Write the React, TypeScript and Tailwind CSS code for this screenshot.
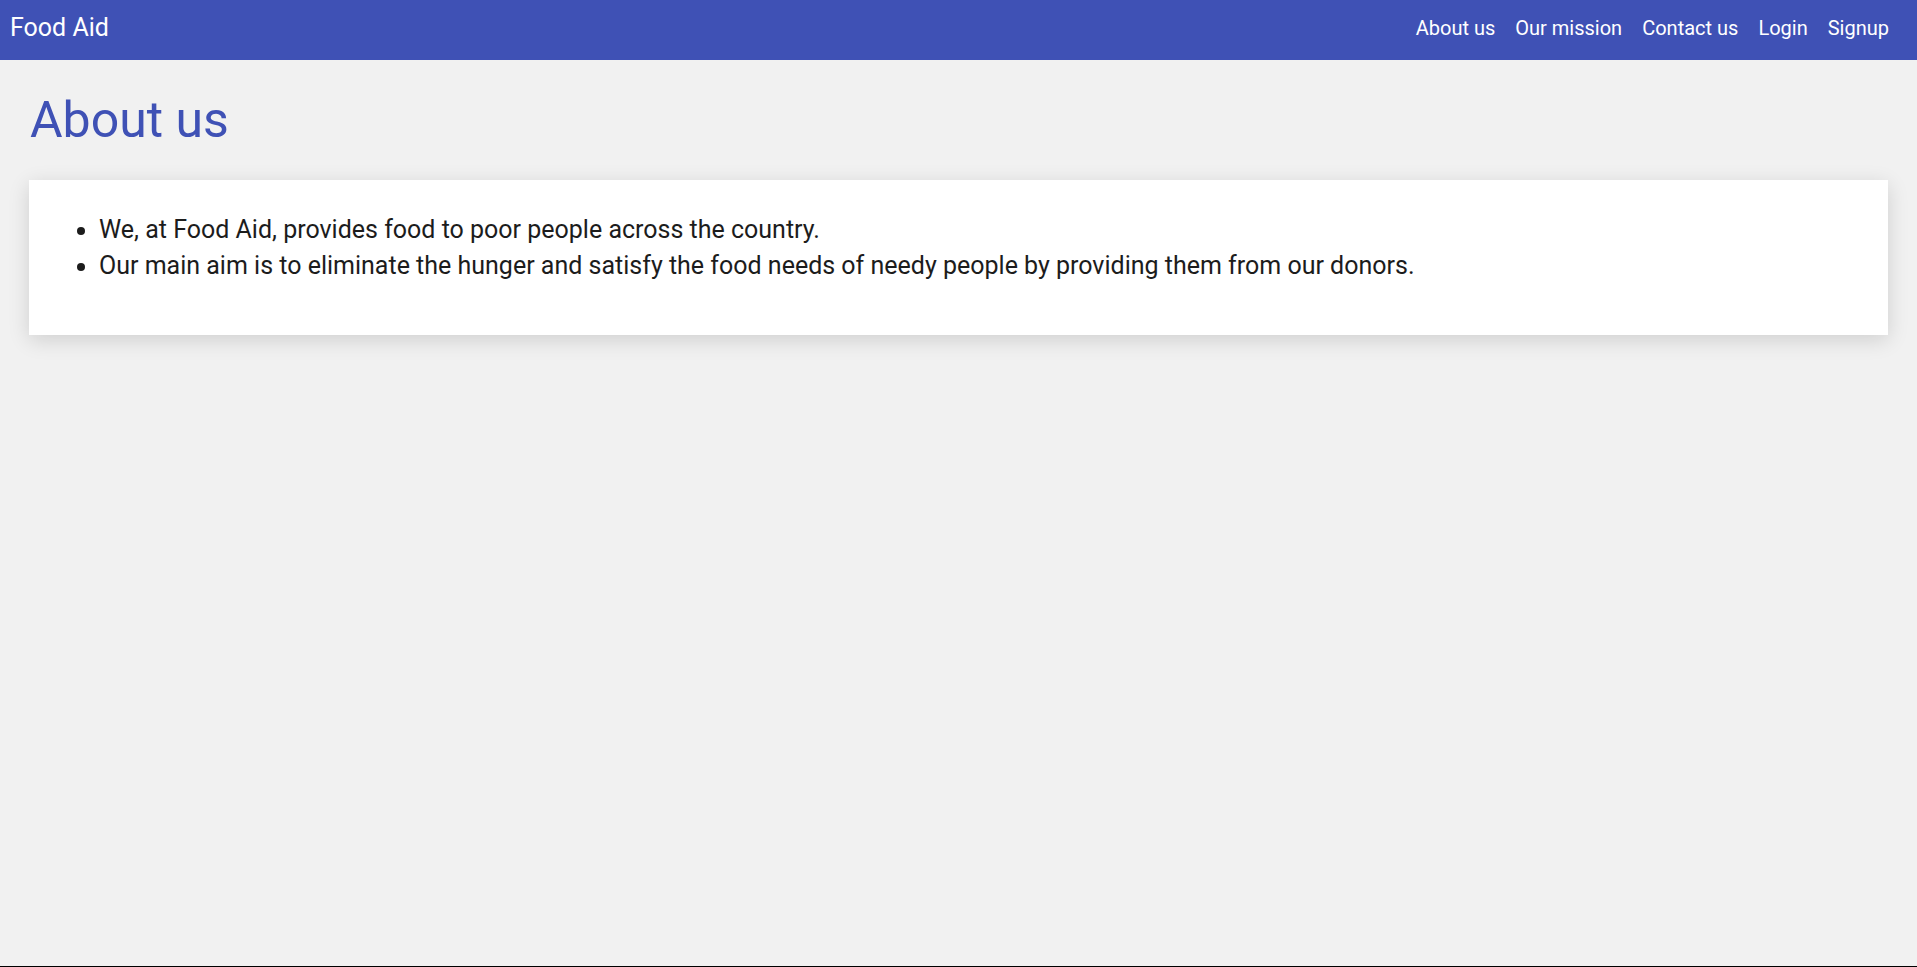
export default function App() {
  const links = ["About us", "Our mission", "Contact us", "Login", "Signup"];
  return (
    <div
      className="min-h-screen flex flex-col bg-[#f1f1f1] text-[#1c1c1c] border-b border-black"
      style={{ fontFamily: "Roboto, 'Liberation Sans', sans-serif" }}
    >
      <nav className="h-[60px] bg-[#3f51b5] text-white flex items-center justify-between pl-[10px] pr-[18px] pb-[5px]">
        <span className="text-[25px] leading-none">Food Aid</span>
        <div className="flex items-center">
          {links.map((l) => (
            <a key={l} className="px-[10px] text-[20px] leading-none cursor-pointer">
              {l}
            </a>
          ))}
        </div>
      </nav>
      <main className="flex-1 px-[29px]">
        <h1 className="text-[50px] leading-none text-[#3f51b5] pt-[35px] pb-[35px] pl-[1px] m-0 font-normal">About us</h1>
        <div className="bg-white shadow-[0_5px_20px_0_rgba(0,0,0,0.14)] pt-[32px] pb-[51px] pl-[70px] pr-[16px]">
          <ul className="list-disc text-[25px] leading-[36px]">
            <li>We, at Food Aid, provides food to poor people across the country.</li>
            <li>Our main aim is to eliminate the hunger and satisfy the food needs of needy people by providing them from our donors.</li>
          </ul>
        </div>
      </main>
    </div>
  );
}
